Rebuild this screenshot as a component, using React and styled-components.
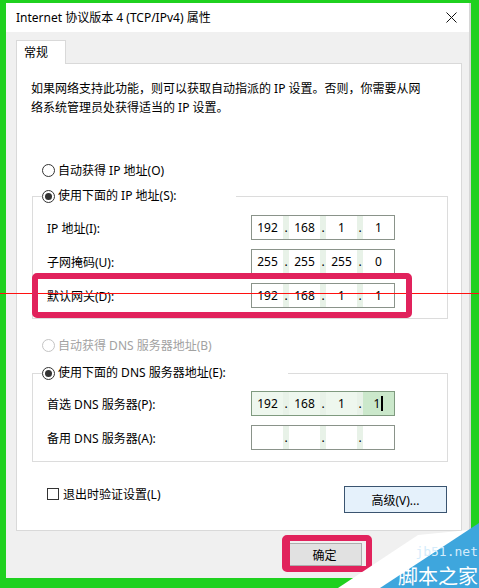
import React from 'react'
import styled, { createGlobalStyle } from 'styled-components'

const GlobalStyle = createGlobalStyle`
  html, body { margin: 0; padding: 0; }
  body {
    font-family: "Noto Sans", "Noto Sans CJK SC", sans-serif;
    font-size: 12px;
    color: #000;
  }
`

const Frame = styled.div`
  position: relative;
  width: 479px;
  height: 588px;
  box-sizing: border-box;
  padding: 3px 8px 10px 6px;
  background: #1fd11f;
  overflow: hidden;
`

const Dialog = styled.div`
  height: 100%;
  display: flex;
  flex-direction: column;
  background: #f0f0f0;
  border-right: 2px solid #d6d6d6;
`

const TitleBar = styled.div`
  height: 29px;
  flex-shrink: 0;
  display: flex;
  align-items: center;
  justify-content: space-between;
  padding: 0 12px 0 10px;
  background: #fff;
  line-height: 16px;
`

const Body = styled.div`
  flex: 1;
  display: flex;
  flex-direction: column;
  padding: 8px 7px 0 10px;
`

const Tab = styled.div`
  align-self: flex-start;
  position: relative;
  z-index: 1;
  width: 50px;
  height: 24px;
  box-sizing: border-box;
  padding-left: 7px;
  line-height: 23px;
  background: #fff;
  border: 1px solid #d9d9d9;
  border-bottom: none;
  margin-bottom: -1px;
`

const Panel = styled.div`
  background: #fff;
  border: 1px solid #d9d9d9;
  padding: 15px 0 17px 0;
  display: flex;
  flex-direction: column;
`

const Description = styled.p`
  margin: 0 0 43px 14px;
  line-height: 19px;
`

const Choice = styled.label`
  display: flex;
  align-items: center;
  gap: 3px;
  height: 20px;
  padding-left: ${p => p.$indent}px;
  margin-top: ${p => p.$top}px;
  color: ${p => (p.$disabled ? '#a2a2a2' : '#000')};
`

const RadioDot = styled.span`
  width: 13px;
  height: 13px;
  box-sizing: border-box;
  border-radius: 50%;
  border: 1px solid ${p => (p.$disabled ? '#c4c4c4' : '#333')};
  display: flex;
  align-items: center;
  justify-content: center;
  flex-shrink: 0;
  &::after {
    content: '';
    width: 7px;
    height: 7px;
    border-radius: 50%;
    background: ${p => (p.$checked ? '#333' : 'transparent')};
  }
`

const Group = styled.fieldset`
  margin: ${p => p.$top}px 13px 0 15px;
  padding: 0;
  border: 1px solid #dcdcdc;
  min-width: 0;
`

const Legend = styled.legend`
  margin-left: 9px;
  padding: 0;
  width: ${p => p.$w}px;
  line-height: 20px;
`

const Rows = styled.div`
  display: flex;
  flex-direction: column;
  gap: 9px;
  padding: ${p => p.$pt}px 52px ${p => p.$pb}px 14px;
`

const Row = styled.div`
  display: grid;
  grid-template-columns: 1fr 144px;
  align-items: center;
  height: 25px;
`

const IpBox = styled.div`
  display: grid;
  grid-template-columns: 1fr 6px 1fr 6px 1fr 6px 1fr;
  height: 25px;
  box-sizing: border-box;
  border: 1px solid ${p => (p.$focus ? '#7f9a7f' : '#8a938a')};
  background: ${p => (p.$focus ? '#eef7ee' : '#fff')};
  line-height: 23px;
  text-align: center;
`

const Octet = styled.span`
  background: ${p => (p.$sel ? '#cbe8cb' : 'transparent')};
`

const Dot = styled.span`
  background: #e8f2e8;
`

const Caret = styled.span`
  display: inline-block;
  width: 2px;
  height: 15px;
  margin-left: 1px;
  vertical-align: -3px;
  background: #000;
`

const BottomRow = styled.div`
  display: flex;
  justify-content: space-between;
  align-items: flex-start;
  margin-top: 24px;
  padding: 0 14px 0 30px;
`

const CheckLabel = styled.label`
  display: flex;
  align-items: center;
  gap: 4px;
  height: 16px;
`

const CheckBox = styled.span`
  width: 12px;
  height: 12px;
  box-sizing: border-box;
  border: 1px solid #333;
`

const Button = styled.button`
  width: ${p => p.$w}px;
  height: ${p => p.$h}px;
  box-sizing: border-box;
  padding: 0;
  font: inherit;
  color: #000;
  background: ${p => (p.$primary ? '#e5f1fb' : '#e1e1e1')};
  border: 1px solid ${p => (p.$primary ? '#3a5470' : '#adadad')};
`

const Footer = styled.div`
  display: flex;
  justify-content: flex-end;
  padding: 12px 100px 0 0;
`

const RedLine = styled.div`
  position: absolute;
  left: 0;
  top: 293px;
  width: 479px;
  height: 0;
  border-top: 1px solid #ff1010;
`

const Highlight = styled.div`
  position: absolute;
  left: ${p => p.$x}px;
  top: ${p => p.$y}px;
  width: ${p => p.$w}px;
  height: ${p => p.$h}px;
  box-sizing: border-box;
  border: 6px solid #e1225c;
  border-left-width: ${p => p.$lw ?? 6}px;
  border-radius: 5px;
`

const Watermark = styled.svg`
  position: absolute;
  right: 0;
  bottom: 0;
  display: block;
`

function IpField({ parts, focus, caret }) {
  const cells = []
  parts.forEach((v, i) => {
    const last = i === parts.length - 1
    cells.push(
      <Octet key={'o' + i} $sel={focus && last}>
        {v}
        {caret && last && <Caret />}
      </Octet>
    )
    if (!last) cells.push(<Dot key={'d' + i}>.</Dot>)
  })
  return <IpBox $focus={focus}>{cells}</IpBox>
}

function Radio({ children, checked, disabled, top = 0, indent = 25 }) {
  return (
    <Choice $disabled={disabled} $top={top} $indent={indent}>
      <RadioDot $checked={checked} $disabled={disabled} />
      {children}
    </Choice>
  )
}

export default function App() {
  return (
    <Frame>
      <GlobalStyle />
      <Dialog>
        <TitleBar>
          <span>Internet 协议版本 4 (TCP/IPv4) 属性</span>
          <svg width="11" height="11" viewBox="0 0 11 11">
            <path d="M0.5 0.5 L10.5 10.5 M10.5 0.5 L0.5 10.5" stroke="#111" strokeWidth="1" />
          </svg>
        </TitleBar>
        <Body>
          <Tab>常规</Tab>
          <Panel>
            <Description>
              如果网络支持此功能，则可以获取自动指派的 IP 设置。否则，你需要从网
              <br />
              络系统管理员处获得适当的 IP 设置。
            </Description>

            <Radio>自动获得 IP 地址(O)</Radio>
            <Group $top={6}>
              <Legend $w={194}>
                <Radio checked indent={0}>
                  <span>使用下面的 IP 地址(S):</span>
                </Radio>
              </Legend>
              <Rows $pt={9} $pb={10}>
                <Row>
                  <span>IP 地址(I):</span>
                  <IpField parts={['192', '168', '1', '1']} />
                </Row>
                <Row>
                  <span>子网掩码(U):</span>
                  <IpField parts={['255', '255', '255', '0']} />
                </Row>
                <Row>
                  <span>默认网关(D):</span>
                  <IpField parts={['192', '168', '1', '1']} />
                </Row>
              </Rows>
            </Group>

            <Radio disabled top={16}>自动获得 DNS 服务器地址(B)</Radio>
            <Group $top={8}>
              <Legend $w={246}>
                <Radio checked indent={0}>
                  <span>使用下面的 DNS 服务器地址(E):</span>
                </Radio>
              </Legend>
              <Rows $pt={8} $pb={11}>
                <Row>
                  <span>首选 DNS 服务器(P):</span>
                  <IpField parts={['192', '168', '1', '1']} focus caret />
                </Row>
                <Row>
                  <span>备用 DNS 服务器(A):</span>
                  <IpField parts={['', '', '', '']} />
                </Row>
              </Rows>
            </Group>

            <BottomRow>
              <CheckLabel>
                <CheckBox />
                退出时验证设置(L)
              </CheckLabel>
              <Button $primary $w={103} $h={27}>高级(V)...</Button>
            </BottomRow>
          </Panel>
          <Footer>
            <Button $w={75} $h={23}>确定</Button>
          </Footer>
        </Body>
      </Dialog>

      <RedLine />
      <Highlight $x={32} $y={273} $w={380} $h={45} />
      <Highlight $x={282} $y={535} $w={90} $h={37} $lw={8} />

      <Watermark width="141" height="70" viewBox="0 0 141 70">
        <polygon points="0,70 80,17 141,11 141,70" fill="#ffffff" />
        <polygon points="42,70 141,5 141,70" fill="#3ea6dd" />
        <text x="140" y="38" textAnchor="end" fontFamily="'DejaVu Sans Mono', monospace" fontSize="13" fill="#d4ecfb">jb51.net</text>
        <text x="140" y="66" textAnchor="end" fontFamily="'Noto Sans CJK SC', sans-serif" fontSize="20" fill="#ffffff">脚本之家</text>
      </Watermark>
    </Frame>
  )
}
